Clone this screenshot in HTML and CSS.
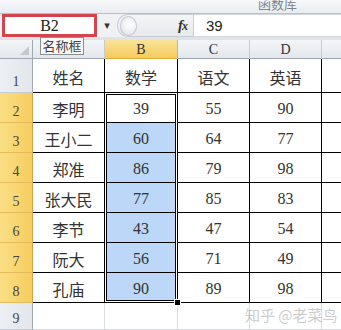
FILE: index.html
```html
<!DOCTYPE html>
<html>
<head>
	<title>成绩表</title>
	<link rel="stylesheet" href="styles.css">
</head>
<body>
	<div class="ribbon"><span class="group">函数库</span></div>
	<div class="fbar">
		<div class="namebox">B2</div>
		<div class="drop">&#9662;</div>
		<div class="fxwrap">
			<span class="knob"></span>
			<span class="fx">f<span class="fxx">x</span></span>
		</div>
		<div class="formula">39</div>
	</div>
	<div class="band"></div>

	<div class="sheet">
		<div class="hd corner"><span class="tri"></span></div>
		<div class="hd">A</div>
		<div class="hd sel">B</div>
		<div class="hd">C</div>
		<div class="hd">D</div>
		<div class="hd last"></div>

		<div class="rh">1</div>
		<div class="c">姓名</div>
		<div class="c">数学</div>
		<div class="c">语文</div>
		<div class="c">英语</div>
		<div class="c e"></div>

		<div class="rh on">2</div>
		<div class="c">李明</div>
		<div class="c">39</div>
		<div class="c">55</div>
		<div class="c">90</div>
		<div class="c e"></div>

		<div class="rh on">3</div>
		<div class="c">王小二</div>
		<div class="c blue">60</div>
		<div class="c">64</div>
		<div class="c">77</div>
		<div class="c e"></div>

		<div class="rh on">4</div>
		<div class="c">郑准</div>
		<div class="c blue">86</div>
		<div class="c">79</div>
		<div class="c">98</div>
		<div class="c e"></div>

		<div class="rh on">5</div>
		<div class="c">张大民</div>
		<div class="c blue">77</div>
		<div class="c">85</div>
		<div class="c">83</div>
		<div class="c e"></div>

		<div class="rh on">6</div>
		<div class="c">李节</div>
		<div class="c blue">43</div>
		<div class="c">47</div>
		<div class="c">54</div>
		<div class="c e"></div>

		<div class="rh on">7</div>
		<div class="c">阮大</div>
		<div class="c blue">56</div>
		<div class="c">71</div>
		<div class="c">49</div>
		<div class="c e"></div>

		<div class="rh on">8</div>
		<div class="c">孔庙</div>
		<div class="c blue">90</div>
		<div class="c">89</div>
		<div class="c">98</div>
		<div class="c e"></div>

		<div class="rh">9</div>
		<div class="c empty"></div>
		<div class="c empty"></div>
		<div class="c empty"></div>
		<div class="c empty"></div>
		<div class="c empty e"></div>
	</div>

	<div class="selection"></div>
	<div class="handle"></div>
	<div class="tip">名称框</div>
	<div class="mark">知乎 @老菜鸟</div>
</body>
</html>
```

FILE: styles.css
```css
html, body {
	margin: 0;
	padding: 0;
}
body {
	width: 341px;
	height: 330px;
	overflow: hidden;
	position: relative;
	background: #fff;
	font-family: "Liberation Serif", "Noto Sans CJK SC", serif;
	color: #222;
}

.ribbon {
	height: 13px;
	background: linear-gradient(#f6f7f9, #e9edf2);
	border-bottom: 1px solid #b7bfca;
	overflow: hidden;
	padding-left: 258px;
}
.group {
	display: block;
	font-family: "Noto Sans CJK SC", sans-serif;
	font-size: 13px;
	line-height: 8px;
	color: #7d8590;
}

.fbar {
	display: flex;
	height: 23px;
	background: #eff1f4;
}
.namebox {
	box-sizing: border-box;
	width: 95px;
	margin-left: 2px;
	border: 3px solid #d5434c;
	background: #fff;
	font-size: 16px;
	line-height: 17px;
	text-align: center;
}
.drop {
	width: 20px;
	text-align: center;
	font-size: 11px;
	line-height: 23px;
	color: #333;
	font-family: "DejaVu Sans", sans-serif;
}
.fxwrap {
	box-sizing: border-box;
	width: 76px;
	display: flex;
	align-items: center;
	justify-content: space-between;
	border-radius: 11px 0 0 11px;
	background: linear-gradient(#f4f5f7, #e6e9ed);
	border: 1px solid #c9ced6;
	border-right: none;
}
.knob {
	width: 15px;
	height: 18px;
	margin-left: 2px;
	border-radius: 50%;
	background: radial-gradient(circle at 60% 40%, #ffffff, #dde1e6);
	border: 1px solid #c3c8cf;
}
.fx {
	font-style: italic;
	font-weight: bold;
	font-size: 15px;
	color: #333;
	margin-right: 6px;
	letter-spacing: -1px;
}
.fxx {
	font-size: 12px;
}
.formula {
	flex: 1;
	box-sizing: border-box;
	background: #fff;
	border-top: 1px solid #d3d8df;
	border-bottom: 1px solid #d3d8df;
	border-left: 1px solid #c9ced6;
	padding-left: 12px;
	font-family: "Liberation Sans", sans-serif;
	font-size: 15px;
	line-height: 21px;
}
.band {
	height: 3px;
	background: #dfe3e8;
}

.sheet {
	display: grid;
	grid-template-columns: 33px 72px 73px 72px 72px 1fr;
	grid-template-rows: 19px 34px repeat(7, 30px) 1fr;
	height: 290px;
}
.sheet > div {
	box-sizing: border-box;
}

.hd {
	display: flex;
	align-items: center;
	justify-content: center;
	background: linear-gradient(#f3f5f8, #e3e7ec);
	border-right: 1px solid #c5cbd3;
	border-bottom: 1px solid #9ea7b2;
	font-size: 14px;
	color: #333;
	padding-top: 1px;
}
.hd.sel {
	background: linear-gradient(#fae39a, #f5cb5c);
	border-bottom-color: #e3ad35;
	border-right-color: #d9b45c;
}
.hd.last {
	border-right: none;
}
.corner {
	position: relative;
	border-right-color: #9ea7b2;
}
.tri {
	position: absolute;
	right: 3px;
	bottom: 3px;
	width: 0;
	height: 0;
	border-left: 9px solid transparent;
	border-bottom: 9px solid #c4c9d0;
}

.rh {
	display: flex;
	align-items: flex-end;
	justify-content: center;
	padding-bottom: 2px;
	background: linear-gradient(90deg, #eceff3, #e2e6eb);
	border-right: 1px solid #9ea7b2;
	border-bottom: 1px solid #c5cbd3;
	font-size: 14px;
	color: #444;
}
.rh.on {
	background: linear-gradient(90deg, #fbdf86, #f6cd5e);
	border-bottom-color: #e4bb5a;
	border-right-color: #d9a23a;
}

.c {
	display: flex;
	align-items: center;
	justify-content: center;
	padding-top: 2px;
	border-right: 1px solid #000;
	border-bottom: 1px solid #000;
	font-size: 16px;
	color: #333;
}
.c.blue {
	background: #bcd7f7;
}
.c.e {
	border-right: none;
}
.c.empty {
	border-color: #dadcdf;
}

.selection {
	position: absolute;
	left: 104px;
	top: 92px;
	width: 74px;
	height: 211px;
	box-sizing: border-box;
	border: 1px solid #000;
	box-shadow: inset 0 0 0 1px #fff, inset 0 0 0 2px #000;
}
.handle {
	position: absolute;
	left: 174px;
	top: 299px;
	width: 5px;
	height: 5px;
	background: #000;
	border: 1px solid #fff;
}
.tip {
	position: absolute;
	left: 40px;
	top: 37px;
	width: 44px;
	height: 18px;
	box-sizing: border-box;
	border: 1px solid #8a8f96;
	background: #f8f8f8;
	font-family: "Noto Sans CJK SC", sans-serif;
	font-size: 13px;
	line-height: 16px;
	text-align: center;
	color: #444;
}
.mark {
	position: absolute;
	left: 245px;
	top: 304px;
	font-family: "Noto Sans CJK SC", sans-serif;
	font-size: 15px;
	color: rgba(160, 160, 160, 0.55);
}
```
